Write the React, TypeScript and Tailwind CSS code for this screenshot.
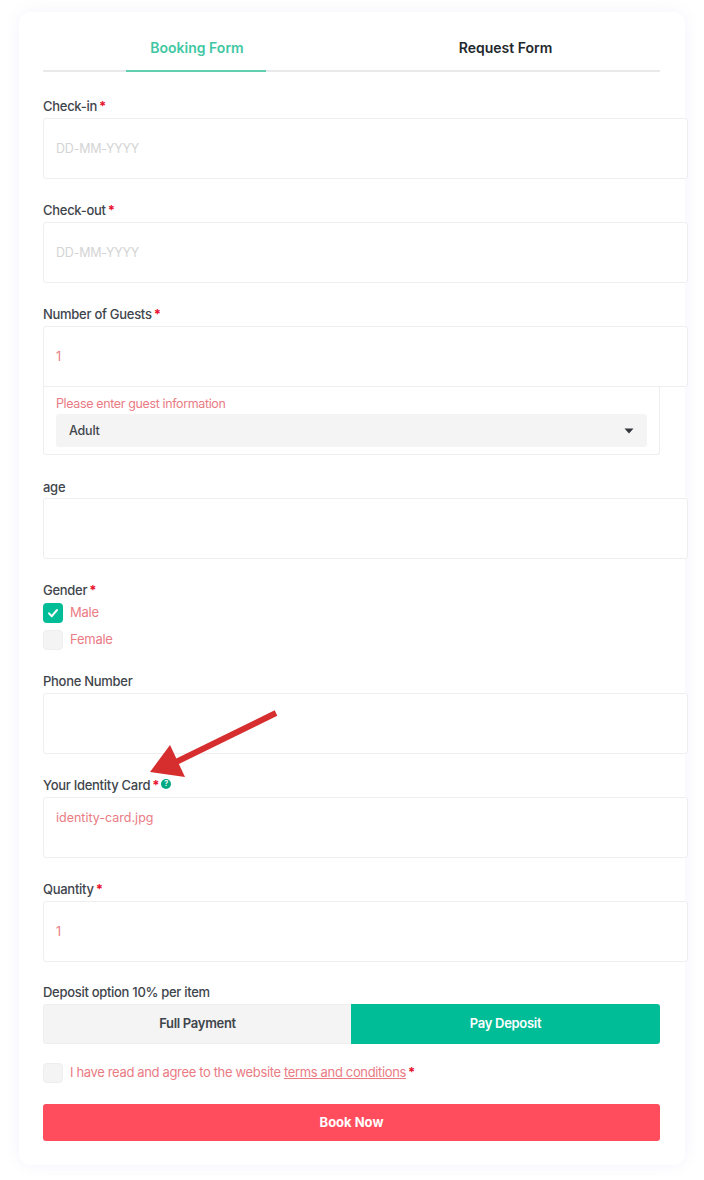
import React from "react";

const Star = () => <span className="text-[#e8112d] font-bold ml-[2px]">*</span>;

function Label({ text, req, children }: { text: string; req?: boolean; children?: React.ReactNode }) {
  return (
    <div className="h-5 mb-[2px] flex items-center text-[13px] tracking-[-0.28px] font-medium text-[#40454c] leading-5 whitespace-nowrap">
      {text}
      {req && <Star />}
      {children}
    </div>
  );
}

function Input({ value, placeholder, top }: { value?: string; placeholder?: boolean; top?: boolean }) {
  return (
    <div
      className={`w-[645px] h-[61px] bg-white border border-[#eeeeee] rounded-[3px] px-3 flex text-[12.5px] ${
        top ? "items-start pt-[11px]" : "items-center pt-[2px]"
      } ${placeholder ? "text-[#d4d4d4] tracking-[-0.2px]" : "text-[#ea7b84]"}`}
    >
      {value}
    </div>
  );
}

function Check({ checked, label }: { checked?: boolean; label: string }) {
  return (
    <div className="flex items-center gap-[7px] h-5">
      <div
        className={`w-5 h-5 rounded-[4px] flex items-center justify-center ${
          checked ? "bg-[#00bd97]" : "bg-[#f4f4f4] border border-[#eeeeee]"
        }`}
      >
        {checked && (
          <svg width="12" height="12" viewBox="0 0 12 12" fill="none">
            <path d="M2 6.4 L4.8 9.2 L10 3" stroke="white" strokeWidth="2" strokeLinecap="round" strokeLinejoin="round" />
          </svg>
        )}
      </div>
      <span className="text-[13px] tracking-[-0.25px] text-[#ea7b84]">{label}</span>
    </div>
  );
}

export default function App() {
  return (
    <div className="w-[704px] h-[1180px] bg-white overflow-hidden pt-3 pl-[19px] font-['Inter','Liberation_Sans',sans-serif]">
      <div className="relative w-[666px] h-[1153px] bg-white rounded-xl shadow-[0_0_16px_rgba(90,100,190,0.07)] px-6">
        <div className="flex h-[60px] border-b-2 border-[#e8e9ea] w-[617px]">
          <div className="w-[308px] flex justify-center pr-[2px]">
            <div className="w-[140px] h-[60px] border-b-2 border-[#5fcfb0] flex items-start justify-center pl-[2px] pt-[27px] text-[14px] font-semibold leading-[18px] text-[#3fc7a3]">
              Booking Form
            </div>
          </div>
          <div className="w-[309px] flex items-start justify-center pt-[27px] text-[14px] font-semibold leading-[18px] text-[#23282d]">
            Request Form
          </div>
        </div>

        <div className="mt-6">
          <Label text="Check-in" req />
          <Input value="DD-MM-YYYY" placeholder />
        </div>
        <div className="mt-[21px]">
          <Label text="Check-out" req />
          <Input value="DD-MM-YYYY" placeholder />
        </div>
        <div className="mt-[21px]">
          <Label text="Number of Guests" req />
          <Input value="1" />
          <div className="w-[617px] h-[69px] -mt-px border border-t-0 border-[#eeeeee] rounded-b-[3px] px-3 pt-[9px]">
            <div className="text-[12.5px] tracking-[-0.37px] leading-[18px] text-[#ea7b84] h-[19px]">Please enter guest information</div>
            <div className="h-[33px] bg-[#f4f4f4] rounded-[3px] pl-[13px] pr-[13px] flex items-center justify-between text-[12.5px] tracking-[-0.2px] font-medium text-[#40454c]">
              <span className="pt-[2px]">Adult</span>
              <svg width="10" height="6" viewBox="0 0 10 6">
                <path d="M0.5 0.5 H9.5 L5 5.5 Z" fill="#33373d" />
              </svg>
            </div>
          </div>
        </div>
        <div className="mt-[22px]">
          <Label text="age" />
          <div className="-mt-px">
            <Input />
          </div>
        </div>
        <div className="mt-[21px]">
          <Label text="Gender" req />
          <div className="pt-px flex flex-col gap-[7px]">
            <Check checked label="Male" />
            <Check label="Female" />
          </div>
        </div>
        <div className="mt-[21px]">
          <Label text="Phone Number" />
          <Input />
        </div>
        <div className="mt-[21px]">
          <Label text="Your Identity Card" req>
            <span className="ml-[2px] mb-[2px] w-[10px] h-[10px] rounded-full bg-[#00a884] text-white text-[7px] font-bold leading-[10px] text-center">?</span>
          </Label>
          <Input value="identity-card.jpg" top />
        </div>
        <div className="mt-[21px]">
          <Label text="Quantity" req />
          <Input value="1" />
        </div>
        <div className="mt-[21px]">
          <div className="h-5 mb-px flex items-center text-[13px] tracking-[-0.3px] font-medium text-[#40454c]">Deposit option 10% per item</div>
          <div className="flex w-[617px] h-10 rounded-[3px] overflow-hidden text-[13px] tracking-[-0.3px] font-semibold">
            <div className="w-[308px] bg-[#f4f4f4] border border-r-0 border-[#eeeeee] flex items-center justify-center text-[#40454c]">Full Payment</div>
            <div className="w-[309px] bg-[#00bd97] flex items-center justify-center text-white">Pay Deposit</div>
          </div>
        </div>
        <div className="mt-[19px] flex items-center gap-[7px] h-5 text-[13px] tracking-[-0.35px] text-[#ea7b84]">
          <div className="w-5 h-5 rounded-[4px] bg-[#f4f4f4] border border-[#eeeeee]" />
          <span>
            I have read and agree to the website <span className="underline">terms and conditions</span>
            <Star />
          </span>
        </div>
        <div className="mt-[21px] w-[617px] h-[37px] bg-[#ff4d5e] rounded-[3px] flex items-center justify-center text-white text-[13px] font-bold">
          Book Now
        </div>

        <svg className="absolute left-[115px] top-[690px]" width="160" height="80" viewBox="0 0 160 80">
          <path d="M142 11 L36 63" stroke="#d62e2e" strokeWidth="6" fill="none" />
          <path d="M16 70 L36 43 L51 75 Z" fill="#d62e2e" />
        </svg>
      </div>
    </div>
  );
}
